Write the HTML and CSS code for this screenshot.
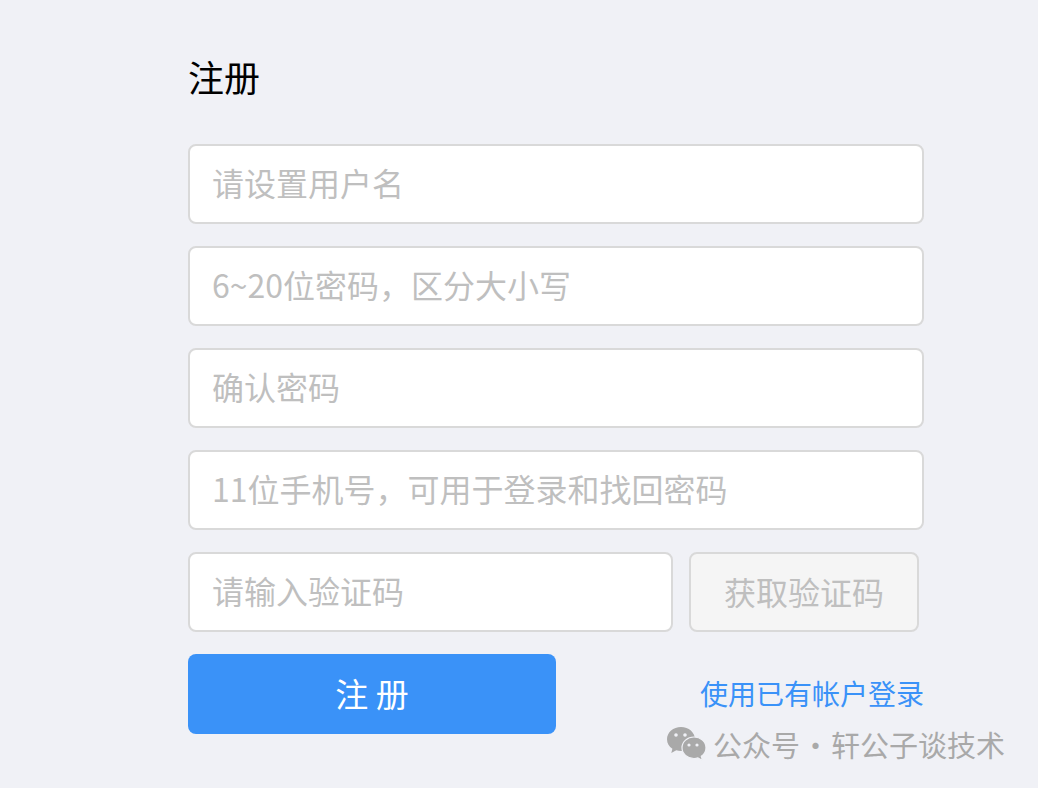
FILE: index.html
```html
<!DOCTYPE html>
<html lang="zh-CN">
<head>
  <meta charset="UTF-8" />
  <title>注册</title>
  <link rel="stylesheet" href="styles.css">
</head>
<body>
  <div class="register">
    <h1>注册</h1>
    <input class="field" type="text" placeholder="请设置用户名">
    <input class="field" type="text" placeholder="6~20位密码，区分大小写">
    <input class="field" type="text" placeholder="确认密码">
    <input class="field" type="text" placeholder="11位手机号，可用于登录和找回密码">
    <div class="code-row">
      <input class="field code-input" type="text" placeholder="请输入验证码">
      <button class="code-btn">获取验证码</button>
    </div>
    <div class="submit-row">
      <button class="submit-btn">注 册</button>
      <a class="login-link" href="#">使用已有帐户登录</a>
    </div>
  </div>

  <!-- watermark over the corner -->
  <div class="watermark">
    <svg class="wechat" width="40" height="34" viewBox="0 0 40 34">
      <path d="M14 0C6.300 0 0 5.400 0 12.200c0 4 2.100 7.400 5.400 9.600L4.300 26l5-2.700c1.500.5 3 .8 4.700.8 7.700 0 14-5.300 14-11.900S21.700 0 14 0z" fill="#a9a9a9"/>
      <path d="M39 20.800C39 14.800 33.600 10 27 10s-12 4.800-12 10.800S20.400 31.500 27 31.500c1.400 0 2.700-.2 3.900-.6l4.600 2.600-1.200-4.300c3.300-1.900 4.700-5 4.700-8.400z" fill="#a9a9a9" stroke="#f0f1f6" stroke-width="1.200"/>
      <circle cx="9" cy="8" r="1.800" fill="#f0f1f6"/>
      <circle cx="18" cy="8" r="1.800" fill="#f0f1f6"/>
      <circle cx="22" cy="18" r="1.600" fill="#f0f1f6"/>
      <circle cx="30" cy="18" r="1.600" fill="#f0f1f6"/>
    </svg>
    <span>公众号 · 轩公子谈技术</span>
  </div>
</body>
</html>
```
FILE: styles.css
```css
:root {
  --page-bg: #f0f1f6;
  --line: #d9d9d9;
  --hint: #bfbfbf;
  --blue: #3a92f8;
}
body {
  margin: 0;
  height: 788px;
  overflow: hidden;
  background: var(--page-bg);
  font-family: "Noto Sans CJK SC", "Liberation Sans", sans-serif;
}
.register {
  width: 736px;
  margin-left: 188px;
  padding-top: 51px;
  display: flex;
  flex-direction: column;
  gap: 22px;
}
h1 {
  margin: 0 0 21px 0;
  height: 50px;
  font-size: 36px;
  line-height: 50px;
  font-weight: 400;
  color: #000;
}
.field {
  box-sizing: border-box;
  width: 100%;
  height: 80px;
  padding: 0 22px 4px;
  background: #fff;
  border: 2px solid var(--line);
  border-radius: 8px;
  outline: none;
  font-family: inherit;
  font-size: 32px;
}
.field::placeholder {
  color: var(--hint);
  opacity: 1;
}
.code-row {
  display: flex;
  gap: 16px;
}
.code-input {
  width: 485px;
}
.code-btn {
  box-sizing: border-box;
  width: 230px;
  height: 80px;
  padding: 0 0 3px;
  background: #f5f5f5;
  border: 2px solid var(--line);
  border-radius: 8px;
  color: var(--hint);
  font-family: inherit;
  font-size: 32px;
}
.submit-row {
  display: flex;
  justify-content: space-between;
  align-items: center;
}
.submit-btn {
  width: 368px;
  height: 80px;
  padding: 0 0 3px;
  background: var(--blue);
  border: none;
  border-radius: 8px;
  color: #fff;
  font-family: inherit;
  font-size: 33px;
}
.login-link {
  margin: 0 0 3px 0;
  color: var(--blue);
  font-size: 28px;
  text-decoration: none;
}
.watermark {
  position: absolute;
  left: 667px;
  top: 726px;
  display: flex;
  align-items: center;
  gap: 6px;
  color: #a9a9a9;
  font-size: 29px;
  line-height: 36px;
  word-spacing: -5.500px;
  white-space: nowrap;
}
```
